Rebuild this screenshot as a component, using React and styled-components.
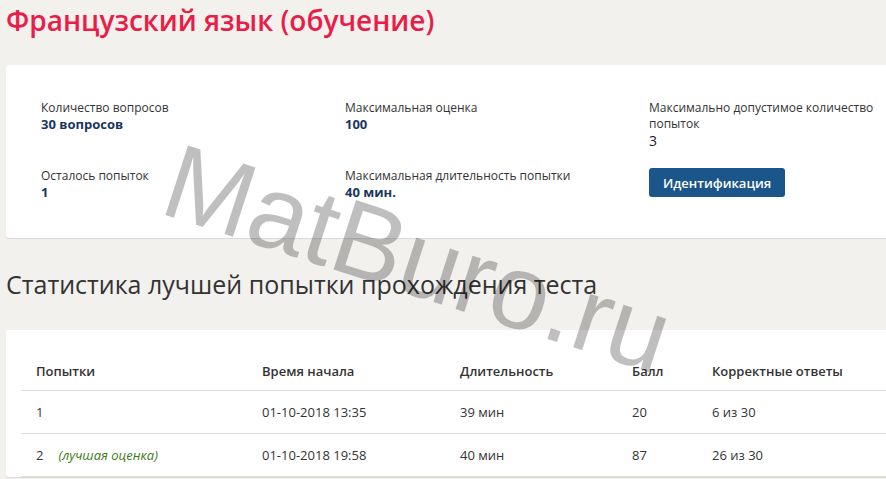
import React from "react";
import styled, { createGlobalStyle } from "styled-components";

const GlobalStyle = createGlobalStyle`
  html, body {
    margin: 0;
    padding: 0;
    background: #f2f1ee;
    overflow: hidden;
  }
  body {
    font-family: "Open Sans", "Noto Sans", sans-serif;
    color: #333;
  }
`;

const info = [
  { label: "Количество вопросов", value: "30 вопросов" },
  { label: "Максимальная оценка", value: "100" },
  { label: "Максимально допустимое количество попыток", value: "3", plain: true },
  { label: "Осталось попыток", value: "1" },
  { label: "Максимальная длительность попытки", value: "40 мин." },
];

const attempts = [
  { n: "1", start: "01-10-2018 13:35", dur: "39 мин", score: "20", ok: "6 из 30" },
  { n: "2", best: true, start: "01-10-2018 19:58", dur: "40 мин", score: "87", ok: "26 из 30" },
];

export default function App() {
  return (
    <Page>
      <GlobalStyle />
      <Title>Французский язык (обучение)</Title>

      <Card $pad="35px 35px 37px">
        <InfoGrid>
          {info.map((item, i) => (
            <InfoItem key={i}>
              <InfoLabel>{item.label}</InfoLabel>
              <InfoValue $plain={item.plain}>{item.value}</InfoValue>
            </InfoItem>
          ))}
          <InfoItem>
            <Button>Идентификация</Button>
          </InfoItem>
        </InfoGrid>
      </Card>

      <Heading>Статистика лучшей попытки прохождения теста</Heading>

      <Card $pad="18px 15px 0">
        <Row $head>
          <Cell>Попытки</Cell>
          <Cell>Время начала</Cell>
          <Cell>Длительность</Cell>
          <Cell>Балл</Cell>
          <Cell>Корректные ответы</Cell>
        </Row>
        {attempts.map((a) => (
          <Row key={a.n}>
            <Cell>
              {a.n}
              {a.best && <Best>(лучшая оценка)</Best>}
            </Cell>
            <Cell>{a.start}</Cell>
            <Cell>{a.dur}</Cell>
            <Cell>{a.score}</Cell>
            <Cell>{a.ok}</Cell>
          </Row>
        ))}
      </Card>

      <Watermark>MatBuro.ru</Watermark>
    </Page>
  );
}

const Page = styled.div`
  position: relative;
  width: 900px;
  height: 479px;
  padding-left: 6px;
`;

const Title = styled.h1`
  margin: 0;
  height: 65px;
  font-size: 28px;
  line-height: 40px;
  font-weight: 600;
  color: #e91d48;
`;

const Card = styled.div`
  background: #fff;
  border-radius: 3px;
  box-shadow: 0 1px 1px #dcdad6;
  padding: ${({ $pad }) => $pad};
`;

const InfoGrid = styled.div`
  display: grid;
  grid-template-columns: 304px 304px 240px;
  row-gap: 19px;
  align-items: start;
`;

const InfoItem = styled.div`
  display: flex;
  flex-direction: column;
  align-items: flex-start;
`;

const InfoLabel = styled.div`
  font-size: 12px;
  line-height: 16px;
  color: #333;
`;

const InfoValue = styled.div`
  font-size: 13px;
  line-height: 17px;
  font-weight: ${({ $plain }) => ($plain ? 400 : 700)};
  color: #1a3660;
  ${({ $plain }) => $plain && "font-size: 14px; color: #222;"}
`;

const Button = styled.button`
  height: 29px;
  padding: 0 14px;
  border: none;
  border-radius: 3px;
  background: #1b568a;
  color: #fff;
  font-family: "Open Sans", sans-serif;
  font-size: 13px;
  font-weight: 600;
  cursor: pointer;
`;

const Heading = styled.h2`
  margin: 0;
  height: 92px;
  display: flex;
  align-items: center;
  font-size: 25px;
  font-weight: 400;
  color: #333;
`;

const Row = styled.div`
  display: grid;
  grid-template-columns: 226px 198px 172px 80px 1fr;
  height: ${({ $head }) => ($head ? "43px" : "42px")};
  align-items: center;
  border-bottom: 1px solid #dedddb;
  font-size: 13px;
  font-weight: ${({ $head }) => ($head ? 600 : 400)};
  color: #333;
  ${({ $head }) => $head && "align-items: end; padding-bottom: 10px; box-sizing: border-box;"}
`;

const Cell = styled.div`
  padding-left: 15px;
`;

const Best = styled.em`
  margin-left: 15px;
  color: #3c7a16;
  font-size: 13px;
`;

const Watermark = styled.div`
  position: absolute;
  left: 418px;
  top: 258px;
  transform: translate(-50%, -50%) rotate(18deg);
  font-family: "Liberation Sans", Arial, sans-serif;
  font-size: 106px;
  line-height: 1;
  color: rgba(0, 0, 0, 0.25);
  white-space: nowrap;
  pointer-events: none;
`;
